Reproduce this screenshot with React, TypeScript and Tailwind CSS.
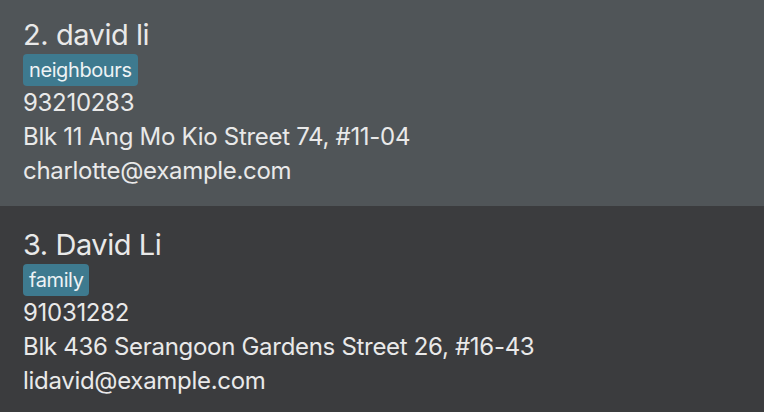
import React from "react";

type Person = { idx: number; name: string; tag: string; phone: string; address: string; email: string };

const people: Person[] = [
  { idx: 2, name: "david li", tag: "neighbours", phone: "93210283", address: "Blk 11 Ang Mo Kio Street 74, #11-04", email: "charlotte@example.com" },
  { idx: 3, name: "David Li", tag: "family", phone: "91031282", address: "Blk 436 Serangoon Gardens Street 26, #16-43", email: "lidavid@example.com" },
];

function Card({ p, bg, pt }: { p: Person; bg: string; pt: string }) {
  return (
    <div className={`${bg} ${pt} pl-[23px] pb-[18px] h-[206px]`}>
      <div className="text-[29px] leading-[36px] tracking-[-0.45px] text-[#e9e9e9]">{p.idx}. {p.name}</div>
      <div className="flex mt-[1px]">
        <span className="bg-[#3e7a8f] text-[#eef3f5] text-[20px] leading-[32px] h-[32px] px-[6px] tracking-[-0.4px] rounded-[4px]">{p.tag}</span>
      </div>
      <div className="text-[24px] leading-[34px] tracking-[-0.3px] text-[#e9e9e9]">{p.phone}</div>
      <div className="text-[24px] leading-[34px] tracking-[-0.3px] text-[#e9e9e9]">{p.address}</div>
      <div className="text-[24px] leading-[34px] tracking-[-0.3px] text-[#e9e9e9]">{p.email}</div>
    </div>
  );
}

export default function App() {
  return (
    <div className="w-[764px] h-[412px] overflow-hidden bg-[#3b3c3e]" style={{ fontFamily: "Inter, 'Noto Sans', sans-serif" }}>
      <Card p={people[0]} bg="bg-[#505558]" pt="pt-[17px]" />
      <Card p={people[1]} bg="bg-[#3b3c3e]" pt="pt-[21px]" />
    </div>
  );
}
